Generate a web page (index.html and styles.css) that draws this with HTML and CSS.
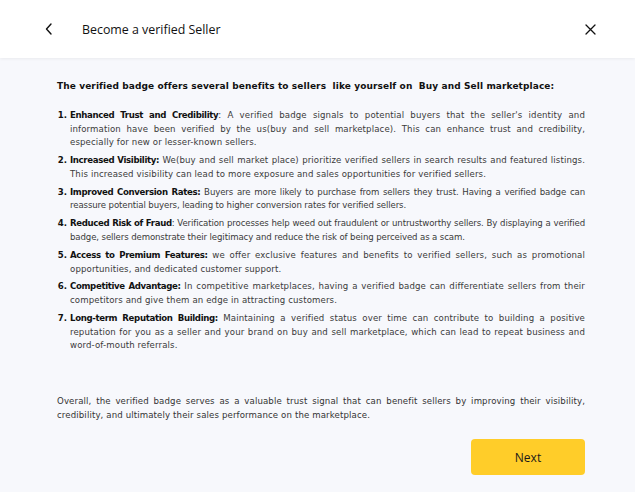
FILE: index.html
```html
<!DOCTYPE html>
<html>
<head>
<meta charset="utf-8">
<link rel="stylesheet" href="styles.css">
</head>
<body>
<div class="page">
  <header class="topbar">
    <button class="icon-btn back" aria-label="Back">
      <svg width="10" height="12" viewBox="0 0 10 12"><path d="M7 1 L2.5 6 L7 11" fill="none" stroke="#111" stroke-width="1.4" stroke-linecap="round" stroke-linejoin="round"/></svg>
    </button>
    <h1 class="title">Become a verified Seller</h1>
    <button class="icon-btn close" aria-label="Close">
      <svg width="11" height="11" viewBox="0 0 11 11"><path d="M1 1 L10 10 M10 1 L1 10" fill="none" stroke="#111" stroke-width="1.3" stroke-linecap="round"/></svg>
    </button>
  </header>
  <main class="content">
    <p class="lead">The verified badge offers several benefits to sellers&nbsp; like yourself on&nbsp; Buy and Sell marketplace:</p>
    <ol class="benefits">
      <li><b>Enhanced Trust and Credibility</b>: A verified badge signals to potential buyers that the seller's identity and information have been verified by the us(buy and sell marketplace). This can enhance trust and credibility, especially for new or lesser-known sellers.</li>
      <li><b>Increased Visibility:</b> We(buy and sell market place) prioritize verified sellers in search results and featured listings. This increased visibility can lead to more exposure and sales opportunities for verified sellers.</li>
      <li class="tighter"><b>Improved Conversion Rates:</b> Buyers are more likely to purchase from sellers they trust. Having a verified badge can reassure potential buyers, leading to higher conversion rates for verified sellers.</li>
      <li class="tighter"><b>Reduced Risk of Fraud</b>: Verification processes help weed out fraudulent or untrustworthy sellers. By displaying a verified badge, sellers demonstrate their legitimacy and reduce the risk of being perceived as a scam.</li>
      <li><b>Access to Premium Features:</b> we offer exclusive features and benefits to verified sellers, such as promotional opportunities, and dedicated customer support.</li>
      <li><b>Competitive Advantage:</b> In competitive marketplaces, having a verified badge can differentiate sellers from their competitors and give them an edge in attracting customers.</li>
      <li><b>Long-term Reputation Building:</b> Maintaining a verified status over time can contribute to building a positive reputation for you as a seller and your brand on buy and sell marketplace, which can lead to repeat business and word-of-mouth referrals.</li>
    </ol>
    <p class="summary">Overall, the verified badge serves as a valuable trust signal that can benefit sellers by improving their visibility, credibility, and ultimately their sales performance on the marketplace.</p>
    <div class="actions">
      <button class="next">Next</button>
    </div>
  </main>
</div>
</body>
</html>
```

FILE: styles.css
```css
* { box-sizing: border-box; }
html, body { margin: 0; padding: 0; }
body {
  width: 635px;
  height: 492px;
  overflow: hidden;
  background: #f7f8fc;
  font-family: "DejaVu Sans", "Noto Sans", sans-serif;
  color: #1a1a1a;
}
.page { display: flex; flex-direction: column; height: 492px; }
.topbar {
  height: 58px;
  background: #ffffff;
  display: flex;
  align-items: center;
  padding: 0 36px 0 40px;
  box-shadow: 0 1px 3px rgba(0,0,0,0.06);
  position: relative;
  z-index: 1;
}
.icon-btn {
  background: none;
  border: 0;
  padding: 0;
  width: 18px;
  height: 18px;
  display: flex;
  align-items: center;
  justify-content: center;
  cursor: pointer;
}
.title {
  margin: 0 0 0 24px;
  font-family: "Open Sans", sans-serif;
  font-size: 12.4px;
  font-weight: 400;
  color: #111;
  flex: 1;
}
.content {
  flex: 1;
  padding: 22px 50px 0 57px;
  display: flex;
  flex-direction: column;
}
.lead {
  margin: 0;
  font-size: 9px;
  font-weight: 700;
  color: #111;
  line-height: 13px;
  letter-spacing: 0.1px;
}
.benefits {
  margin: 16px 0 0;
  padding: 0 0 0 13px;
  font-size: 8.6px;
  letter-spacing: 0.12px;
  line-height: 13.6px;
  color: #3a3a3a;
  text-align: justify;
}
.benefits li { margin-bottom: 4.4px; padding-left: 0; }
.benefits li.tighter { letter-spacing: -0.12px; }
.benefits li::marker { font-weight: 700; color: #111; letter-spacing: 0; }
.benefits b { color: #111; font-weight: 700; letter-spacing: -0.35px; }
.summary {
  margin: 38px 0 0;
  font-size: 8.6px;
  letter-spacing: 0.12px;
  line-height: 13.6px;
  color: #333;
  text-align: justify;
}
.actions { display: flex; justify-content: flex-end; margin-top: 17px; }
.next {
  width: 114px;
  height: 36px;
  border: 0;
  border-radius: 4px;
  background: #ffcd29;
  font-family: "Open Sans", sans-serif;
  font-size: 12px;
  color: #1a1a1a;
  cursor: pointer;
}
```
